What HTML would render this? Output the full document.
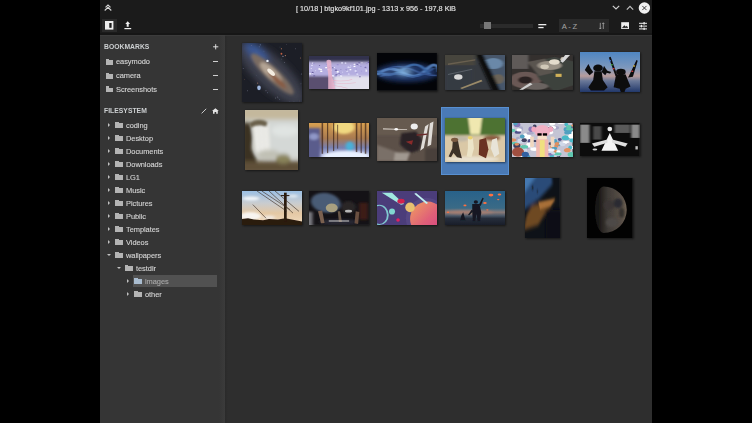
<!DOCTYPE html>
<html><head><meta charset="utf-8">
<style>
*{margin:0;padding:0;box-sizing:border-box}
html,body{width:752px;height:423px;overflow:hidden;background:#000;font-family:"Liberation Sans",sans-serif}
.a{position:absolute}
#app{position:absolute;left:100px;top:0;width:552px;height:423px;background:#2e2e2e;overflow:hidden}
#tb{position:absolute;left:0;top:0;width:552px;height:35px;background:#1b1b1b;border-bottom:2px solid #161616}
#title{position:absolute;left:0;top:3.5px;width:552px;text-align:center;color:#e4e4e4;font-size:8px;letter-spacing:0px;line-height:10px;white-space:nowrap;transform:scaleX(0.908);-webkit-text-stroke:0.15px #e4e4e4}
#side{position:absolute;left:0;top:35px;width:125px;height:388px;background:#353535;border-top:1px solid #3c3c3c}
#side .strip{position:absolute;right:0;top:0;width:6px;height:389px;background:linear-gradient(to right,rgba(59,59,59,0),#3b3b3b)}
.hdr{position:absolute;left:3.8px;font-weight:bold;font-size:7.3px;letter-spacing:0.05px;color:#cdd0d2;line-height:8px;white-space:nowrap;transform:scaleX(0.925);transform-origin:0 0}
.it{position:absolute;font-size:8px;letter-spacing:-0.05px;color:#d4d4d4;line-height:9px;white-space:nowrap;-webkit-text-stroke:0.12px #d4d4d4;transform:scaleX(0.93);transform-origin:0 0}
.fold{position:absolute;width:8px;height:6px;background:#a8a8a8}
.fold:before{content:"";position:absolute;left:0;top:-1.2px;width:3.8px;height:1.2px;background:var(--c)}
.minus{position:absolute;left:112.7px;width:5px;height:1.2px;background:#d0d0d0}
.arr{position:absolute;width:0;height:0;border-top:2px solid transparent;border-bottom:2px solid transparent;border-left:2.6px solid #c0c0c0}
.arrd{position:absolute;width:0;height:0;border-left:2px solid transparent;border-right:2px solid transparent;border-top:2.6px solid #c0c0c0}
#content{position:absolute;left:125px;top:35px;width:427px;height:388px;background:#2e2e2e;border-top:1px solid #363636}
#content:before{content:"";position:absolute;left:0;top:0;width:3px;height:100%;background:linear-gradient(to right,#2a2a2a,rgba(46,46,46,0))}
.th{position:absolute;box-shadow:1px 1px 2px rgba(0,0,0,0.45),0 0 1px 0.3px rgba(0,0,0,0.18)}
</style></head><body>
<div id="app">
  <div id="tb">
    <!-- double chevron -->
    <svg class="a" style="left:3px;top:3px" width="10" height="10" viewBox="0 0 10 10"><path d="M2.5 4.3 L5 1.9 L7.5 4.3 M1.7 7.5 L5 4.3 L8.3 7.5" stroke="#d8d8d8" stroke-width="1.1" fill="none"/></svg>
    <div id="title">[ 10/18 ] btgko9kf101.jpg - 1313 x 956 - 197,8 KiB</div>
    <!-- window controls -->
    <svg class="a" style="left:512.3px;top:5.4px" width="9" height="6" viewBox="0 0 9 6"><path d="M0.8 0.8 L4 4 L7.2 0.8" stroke="#d0d0d0" stroke-width="1.2" fill="none"/></svg>
    <svg class="a" style="left:526.2px;top:5.2px" width="9" height="6" viewBox="0 0 9 6"><path d="M0.8 4.6 L4 1.4 L7.2 4.6" stroke="#c0c0c0" stroke-width="1.2" fill="none"/></svg>
    <svg class="a" style="left:538px;top:2px" width="13" height="13" viewBox="0 0 13 13"><circle cx="6.4" cy="6" r="5.7" fill="#f2f2f2"/><path d="M4.3 3.9 L8.5 8.1 M8.5 3.9 L4.3 8.1" stroke="#2a2a2a" stroke-width="0.9"/></svg>
    <!-- toggle -->
    <div class="a" style="left:1.5px;top:19px;width:15.5px;height:13px;background:#2a2a2a"></div>
    <svg class="a" style="left:4.8px;top:21px" width="9" height="9" viewBox="0 0 9 9"><rect x="0" y="0" width="8.4" height="8.6" fill="#eeeeee"/><rect x="4.3" y="2" width="2.3" height="4.8" fill="#1b1b1b"/></svg>
    <!-- upload -->
    <svg class="a" style="left:23.5px;top:21px" width="9" height="9" viewBox="0 0 9 9"><path d="M3.7 0.3 L1.3 3.0 L2.7 3.0 L2.7 5.8 L4.7 5.8 L4.7 3.0 L6.1 3.0 Z" fill="#eeeeee"/><rect x="0.4" y="7" width="6.8" height="1.2" fill="#eeeeee"/></svg>
    <!-- slider -->
    <div class="a" style="left:379.6px;top:23.6px;width:53px;height:4px;background:#2b2b2b"></div>
    <div class="a" style="left:383.8px;top:21.7px;width:7.5px;height:7.4px;background:#777"></div>
    <!-- sort icon -->
    <svg class="a" style="left:438.3px;top:22.5px" width="10" height="7" viewBox="0 0 10 7"><rect x="0.3" y="1" width="8" height="1.3" fill="#eee"/><rect x="0.3" y="3.9" width="5.3" height="1.3" fill="#eee"/></svg>
    <!-- sort combo -->
    <div class="a" style="left:458.5px;top:18.8px;width:50.3px;height:13.1px;background:#2a2a2a"></div>
    <div class="a" style="left:461.7px;top:21.6px;font-size:7.6px;color:#a4a4a4;line-height:9px;letter-spacing:-0.15px">A - Z</div>
    <svg class="a" style="left:498.8px;top:21.8px" width="6" height="8" viewBox="0 0 6 8"><path d="M1.3 0.8 V7 M0.3 5.8 L1.3 7 L2.3 5.8 M4.3 7 V0.8 M3.3 2 L4.3 0.8 L5.3 2" stroke="#a8a8a8" stroke-width="0.8" fill="none"/></svg>
    <!-- image icon -->
    <svg class="a" style="left:520.8px;top:21.8px" width="9" height="8" viewBox="0 0 9 8"><rect x="0.2" y="0.2" width="7.8" height="6.8" fill="#eee"/><path d="M1.2 5.8 L3.3 3.3 L4.8 4.8 L5.8 3.8 L7 5.8 Z" fill="#1b1b1b"/><rect x="1.2" y="5.6" width="5.8" height="0.5" fill="#1b1b1b"/></svg>
    <!-- settings icon -->
    <svg class="a" style="left:539px;top:21.5px" width="8" height="8" viewBox="0 0 8 8"><rect x="0" y="0.8" width="8" height="1" fill="#eee"/><rect x="0" y="3.6" width="8" height="1" fill="#eee"/><rect x="0" y="6.4" width="8" height="1" fill="#eee"/><rect x="4.5" y="0" width="1.2" height="2.6" fill="#eee"/><rect x="1.8" y="2.8" width="1.2" height="2.6" fill="#eee"/><rect x="4.5" y="5.6" width="1.2" height="2.4" fill="#eee"/></svg>
  </div>

  <div id="side">
    <div class="strip"></div>
  </div>

  <div id="content">
  </div>
<div class="hdr" style="left:3.8px;top:43.02px;font-size:7.3px;line-height:7.3px">BOOKMARKS</div>
<div class="hdr" style="left:3.8px;top:107.12px;font-size:7.3px;line-height:7.3px">FILESYSTEM</div>
<svg class="a" style="left:112.6px;top:43.6px" width="6" height="6" viewBox="0 0 6 6"><path d="M2.7 0.2 V5.4 M0.1 2.8 H5.3" stroke="#dcdcdc" stroke-width="1.0"/></svg>
<svg class="a" style="left:101px;top:107.5px" width="6" height="6" viewBox="0 0 6 6"><path d="M0.6 5.4 L5.2 0.8" stroke="#cccccc" stroke-width="1.0"/></svg>
<svg class="a" style="left:112.2px;top:107.8px" width="7" height="6" viewBox="0 0 7 6"><path d="M3.4 0.2 L6.8 3.0 L5.8 3.0 L5.8 5.8 L4.2 5.8 L4.2 4.0 L2.6 4.0 L2.6 5.8 L1.0 5.8 L1.0 3.0 L0.0 3.0 Z" fill="#e4e4e4"/></svg>
<div class="fold" style="left:5.70px;top:60.00px;width:7.8px;height:4.8px;background:#b4b4b4;--c:#b4b4b4"></div>
<div class="it" style="left:16.40px;top:58.33px;font-size:8.0px;line-height:8.0px">easymodo</div>
<div class="minus" style="top:61.20px"></div>
<div class="fold" style="left:5.70px;top:73.80px;width:7.8px;height:4.8px;background:#b4b4b4;--c:#b4b4b4"></div>
<div class="it" style="left:16.40px;top:72.13px;font-size:8.0px;line-height:8.0px">camera</div>
<div class="minus" style="top:75.00px"></div>
<div class="fold" style="left:5.70px;top:87.60px;width:7.8px;height:4.8px;background:#b4b4b4;--c:#b4b4b4"></div>
<div class="it" style="left:16.40px;top:85.93px;font-size:8.0px;line-height:8.0px">Screenshots</div>
<div class="minus" style="top:88.80px"></div>
<div class="arr" style="left:7.90px;top:123.00px"></div>
<div class="fold" style="left:15.00px;top:123.00px;width:8.1px;height:4.8px;background:#b4b4b4;--c:#b4b4b4"></div>
<div class="it" style="left:25.90px;top:121.53px;font-size:8.0px;line-height:8.0px">coding</div>
<div class="arr" style="left:7.90px;top:136.00px"></div>
<div class="fold" style="left:15.00px;top:136.00px;width:8.1px;height:4.8px;background:#b4b4b4;--c:#b4b4b4"></div>
<div class="it" style="left:25.90px;top:134.53px;font-size:8.0px;line-height:8.0px">Desktop</div>
<div class="arr" style="left:7.90px;top:149.00px"></div>
<div class="fold" style="left:15.00px;top:149.00px;width:8.1px;height:4.8px;background:#b4b4b4;--c:#b4b4b4"></div>
<div class="it" style="left:25.90px;top:147.53px;font-size:8.0px;line-height:8.0px">Documents</div>
<div class="arr" style="left:7.90px;top:162.00px"></div>
<div class="fold" style="left:15.00px;top:162.00px;width:8.1px;height:4.8px;background:#b4b4b4;--c:#b4b4b4"></div>
<div class="it" style="left:25.90px;top:160.53px;font-size:8.0px;line-height:8.0px">Downloads</div>
<div class="arr" style="left:7.90px;top:175.00px"></div>
<div class="fold" style="left:15.00px;top:175.00px;width:8.1px;height:4.8px;background:#b4b4b4;--c:#b4b4b4"></div>
<div class="it" style="left:25.90px;top:173.53px;font-size:8.0px;line-height:8.0px">LG1</div>
<div class="arr" style="left:7.90px;top:188.00px"></div>
<div class="fold" style="left:15.00px;top:188.00px;width:8.1px;height:4.8px;background:#b4b4b4;--c:#b4b4b4"></div>
<div class="it" style="left:25.90px;top:186.53px;font-size:8.0px;line-height:8.0px">Music</div>
<div class="arr" style="left:7.90px;top:201.00px"></div>
<div class="fold" style="left:15.00px;top:201.00px;width:8.1px;height:4.8px;background:#b4b4b4;--c:#b4b4b4"></div>
<div class="it" style="left:25.90px;top:199.53px;font-size:8.0px;line-height:8.0px">Pictures</div>
<div class="arr" style="left:7.90px;top:214.00px"></div>
<div class="fold" style="left:15.00px;top:214.00px;width:8.1px;height:4.8px;background:#b4b4b4;--c:#b4b4b4"></div>
<div class="it" style="left:25.90px;top:212.53px;font-size:8.0px;line-height:8.0px">Public</div>
<div class="arr" style="left:7.90px;top:227.00px"></div>
<div class="fold" style="left:15.00px;top:227.00px;width:8.1px;height:4.8px;background:#b4b4b4;--c:#b4b4b4"></div>
<div class="it" style="left:25.90px;top:225.53px;font-size:8.0px;line-height:8.0px">Templates</div>
<div class="arr" style="left:7.90px;top:240.00px"></div>
<div class="fold" style="left:15.00px;top:240.00px;width:8.1px;height:4.8px;background:#b4b4b4;--c:#b4b4b4"></div>
<div class="it" style="left:25.90px;top:238.53px;font-size:8.0px;line-height:8.0px">Videos</div>
<div class="arrd" style="left:7.00px;top:253.80px"></div>
<div class="fold" style="left:15.00px;top:253.00px;width:8.1px;height:4.8px;background:#b4b4b4;--c:#b4b4b4"></div>
<div class="it" style="left:25.90px;top:251.53px;font-size:8.0px;line-height:8.0px">wallpapers</div>
<div class="arrd" style="left:16.70px;top:266.80px"></div>
<div class="fold" style="left:24.70px;top:266.00px;width:8.1px;height:4.8px;background:#b4b4b4;--c:#b4b4b4"></div>
<div class="it" style="left:35.60px;top:264.53px;font-size:8.0px;line-height:8.0px">testdir</div>
<div class="a" style="left:32.80000000000001px;top:274.7px;width:84.2px;height:12.3px;background:#515151"></div>
<div class="arr" style="left:27.30px;top:279.00px"></div>
<div class="fold" style="left:34.40px;top:279.00px;width:8.1px;height:4.8px;background:#a9bccf;--c:#a9bccf"></div>
<div class="it" style="left:45.30px;top:277.53px;font-size:8.0px;line-height:8.0px;color:#a8a8a8;-webkit-text-stroke-color:#a8a8a8">images</div>
<div class="arr" style="left:27.30px;top:292.00px"></div>
<div class="fold" style="left:34.40px;top:292.00px;width:8.1px;height:4.8px;background:#b4b4b4;--c:#b4b4b4"></div>
<div class="it" style="left:45.30px;top:290.53px;font-size:8.0px;line-height:8.0px">other</div>
<div class="a" style="left:341.2px;top:107.2px;width:67.6px;height:67.6px;background:#4a7ab6;box-shadow:inset 0 0 0 1px #5890d2"></div>
<div class="th" style="left:141.60px;top:42.60px;width:60.70px;height:59.70px"><svg width="60.70" height="59.70" viewBox="0 0 100 100" preserveAspectRatio="none" style="display:block"><defs><filter id="g1" x="-30%" y="-30%" width="160%" height="160%"><feGaussianBlur stdDeviation="6"/></filter></defs><defs><filter id="g1a" x="-30%" y="-30%" width="160%" height="160%"><feGaussianBlur stdDeviation="2.5"/></filter></defs><defs><filter id="g1b" x="-30%" y="-30%" width="160%" height="160%"><feGaussianBlur stdDeviation="0.8"/></filter></defs><rect width="100" height="100" fill="#1c1e26"/><g filter="url(#g1b)"><circle cx="23.8" cy="54.4" r="0.7" fill="#7080a0"/><circle cx="62.6" cy="6.6" r="0.5" fill="#7080a0"/><circle cx="25.9" cy="23.4" r="1.1" fill="#7080a0"/><circle cx="54.1" cy="55.0" r="0.7" fill="#a0a0b8"/><circle cx="23.2" cy="15.2" r="1.1" fill="#7080a0"/><circle cx="74.1" cy="67.1" r="0.5" fill="#8a8aa0"/><circle cx="30.1" cy="3.1" r="1.0" fill="#7080a0"/><circle cx="59.5" cy="92.0" r="0.7" fill="#7080a0"/><circle cx="39.5" cy="80.1" r="0.8" fill="#a0a0b8"/><circle cx="87.9" cy="9.7" r="0.6" fill="#a0a0b8"/><circle cx="25.8" cy="67.2" r="1.0" fill="#c08060"/><circle cx="42.1" cy="83.3" r="0.8" fill="#7080a0"/><circle cx="58.4" cy="90.4" r="0.9" fill="#8a8aa0"/><circle cx="85.6" cy="99.1" r="0.9" fill="#a0a0b8"/><circle cx="69.9" cy="32.6" r="0.8" fill="#8a8aa0"/><circle cx="71.4" cy="21.1" r="1.0" fill="#c08060"/><circle cx="28.5" cy="6.3" r="1.0" fill="#7080a0"/><circle cx="8.9" cy="80.1" r="0.7" fill="#a0a0b8"/><circle cx="2.0" cy="42.7" r="0.7" fill="#8a8aa0"/><circle cx="4.4" cy="61.5" r="0.5" fill="#c08060"/><circle cx="55.1" cy="92.2" r="0.7" fill="#a0a0b8"/><circle cx="99.9" cy="31.0" r="0.5" fill="#8a8aa0"/><circle cx="94.9" cy="97.1" r="0.7" fill="#c08060"/><circle cx="15.6" cy="4.2" r="1.0" fill="#c08060"/><circle cx="36.0" cy="13.8" r="1.0" fill="#7080a0"/><circle cx="46.0" cy="52.0" r="0.9" fill="#8a8aa0"/><circle cx="62.0" cy="94.1" r="0.8" fill="#7080a0"/><circle cx="63.4" cy="71.6" r="1.1" fill="#7080a0"/><circle cx="97.8" cy="52.1" r="0.8" fill="#8a8aa0"/><circle cx="78.8" cy="98.7" r="0.7" fill="#7080a0"/><circle cx="61.6" cy="63.2" r="0.5" fill="#c08060"/><circle cx="46.6" cy="67.9" r="0.7" fill="#c08060"/><circle cx="73.8" cy="2.2" r="0.5" fill="#8a8aa0"/><circle cx="96.3" cy="25.1" r="0.8" fill="#c08060"/><circle cx="17.7" cy="18.5" r="1.0" fill="#c08060"/><circle cx="30.0" cy="37.7" r="1.0" fill="#8a8aa0"/><circle cx="97.1" cy="68.4" r="0.6" fill="#a0a0b8"/><circle cx="65.4" cy="26.9" r="0.7" fill="#7080a0"/><circle cx="65.0" cy="9.7" r="0.9" fill="#c08060"/><circle cx="67.5" cy="22.4" r="1.0" fill="#a0a0b8"/></g><g filter="url(#g1)"><ellipse cx="48" cy="50" rx="72" ry="26" transform="rotate(44 48 50)" fill="#3e404e"/><ellipse cx="24" cy="16" rx="24" ry="10" transform="rotate(44 24 16)" fill="#3a5a9a"/></g><g filter="url(#g1a)"><ellipse cx="50" cy="52" rx="48" ry="11" transform="rotate(44 50 52)" fill="#7a6c62"/><ellipse cx="48" cy="50" rx="24" ry="8" transform="rotate(44 48 50)" fill="#b4a494"/><ellipse cx="58" cy="62" rx="20" ry="4" transform="rotate(44 58 62)" fill="#8a5a40"/></g><g filter="url(#g1b)"><ellipse cx="48" cy="49" rx="8" ry="3.5" transform="rotate(44 48 49)" fill="#f4ece0"/><ellipse cx="28" cy="75" rx="3" ry="4" fill="#a0b8e0"/><circle cx="42" cy="30" r="2" fill="#e8eef8"/><circle cx="65" cy="18" r="1.5" fill="#c06040"/></g></svg></div>
<div class="th" style="left:209.20px;top:55.50px;width:60.00px;height:33.50px"><svg width="60.00" height="33.50" viewBox="0 0 100 100" preserveAspectRatio="none" style="display:block"><defs><filter id="g2" x="-30%" y="-30%" width="160%" height="160%"><feGaussianBlur stdDeviation="2.5"/></filter></defs><defs><filter id="g2b" x="-30%" y="-30%" width="160%" height="160%"><feGaussianBlur stdDeviation="0.9"/></filter></defs><defs><filter id="g2c" x="-30%" y="-30%" width="160%" height="160%"><feGaussianBlur stdDeviation="0.5"/></filter></defs><rect width="100" height="100" fill="#a8a2c8"/><g filter="url(#g2)"><rect x="-10" y="-10" width="120" height="26" fill="#30304e"/><rect x="-10" y="24" width="120" height="36" fill="#b4aee0"/><rect x="-10" y="60" width="48" height="50" fill="#5a5070"/><rect x="42" y="60" width="68" height="50" fill="#e2e0ec"/></g><g filter="url(#g2c)"><circle cx="32.4" cy="24.6" r="1.8" fill="#ffffff"/><circle cx="82.1" cy="22.1" r="1.7" fill="#e8e8ff"/><circle cx="3.7" cy="37.1" r="1.1" fill="#ffffff"/><circle cx="55.1" cy="20.6" r="1.7" fill="#e8e8ff"/><circle cx="63.1" cy="43.7" r="1.1" fill="#6a60a0"/><circle cx="5.0" cy="27.7" r="1.7" fill="#e8e8ff"/><circle cx="29.0" cy="24.3" r="1.1" fill="#9a90d0"/><circle cx="56.0" cy="48.0" r="1.1" fill="#e8e8ff"/><circle cx="37.2" cy="42.1" r="1.1" fill="#ffffff"/><circle cx="61.9" cy="39.8" r="1.6" fill="#9a90d0"/><circle cx="46.6" cy="58.6" r="1.4" fill="#e8e8ff"/><circle cx="79.4" cy="48.8" r="1.3" fill="#9a90d0"/><circle cx="52.5" cy="56.5" r="1.9" fill="#9a90d0"/><circle cx="60.9" cy="21.2" r="1.6" fill="#e8e8ff"/><circle cx="75.7" cy="24.7" r="1.6" fill="#ffffff"/><circle cx="96.2" cy="21.4" r="1.7" fill="#9a90d0"/><circle cx="34.0" cy="33.4" r="1.6" fill="#6a60a0"/><circle cx="6.9" cy="22.1" r="1.3" fill="#ffffff"/><circle cx="6.1" cy="48.9" r="1.8" fill="#6a60a0"/><circle cx="28.5" cy="35.0" r="1.8" fill="#ffffff"/><circle cx="94.1" cy="33.6" r="1.7" fill="#6a60a0"/><circle cx="5.9" cy="51.8" r="1.2" fill="#e8e8ff"/><circle cx="39.8" cy="58.3" r="1.6" fill="#e8e8ff"/><circle cx="44.9" cy="42.2" r="2.1" fill="#6a60a0"/><circle cx="86.4" cy="30.3" r="1.5" fill="#9a90d0"/><circle cx="68.3" cy="34.7" r="1.3" fill="#ffffff"/><circle cx="17.6" cy="28.2" r="1.3" fill="#6a60a0"/><circle cx="83.1" cy="26.0" r="1.3" fill="#e8e8ff"/><circle cx="41.9" cy="34.2" r="1.7" fill="#e8e8ff"/><circle cx="69.0" cy="40.7" r="1.7" fill="#ffffff"/><circle cx="45.7" cy="56.3" r="2.1" fill="#6a60a0"/><circle cx="39.8" cy="35.3" r="1.6" fill="#6a60a0"/><circle cx="6.2" cy="21.0" r="1.3" fill="#e8e8ff"/><circle cx="11.0" cy="44.4" r="1.1" fill="#e8e8ff"/><circle cx="53.7" cy="59.8" r="1.7" fill="#ffffff"/><circle cx="87.4" cy="45.0" r="1.2" fill="#9a90d0"/><circle cx="95.5" cy="44.5" r="1.6" fill="#ffffff"/><circle cx="84.9" cy="61.7" r="1.6" fill="#6a60a0"/><circle cx="31.2" cy="24.3" r="1.9" fill="#9a90d0"/><circle cx="47.9" cy="48.5" r="1.6" fill="#e8e8ff"/><circle cx="95.1" cy="41.2" r="1.2" fill="#ffffff"/><circle cx="75.8" cy="31.1" r="1.8" fill="#ffffff"/><circle cx="69.6" cy="29.5" r="1.4" fill="#e8e8ff"/><circle cx="35.6" cy="27.8" r="1.6" fill="#9a90d0"/><circle cx="63.6" cy="45.0" r="1.9" fill="#e8e8ff"/><circle cx="80.6" cy="54.0" r="1.9" fill="#e8e8ff"/><circle cx="20.0" cy="39.7" r="1.9" fill="#ffffff"/><circle cx="79.0" cy="38.8" r="1.2" fill="#9a90d0"/><circle cx="44.7" cy="59.2" r="2.2" fill="#9a90d0"/><circle cx="8.1" cy="22.5" r="1.6" fill="#9a90d0"/><circle cx="20.4" cy="45.5" r="2.1" fill="#ffffff"/><circle cx="47.9" cy="46.7" r="2.0" fill="#ffffff"/><circle cx="83.5" cy="23.3" r="1.5" fill="#e8e8ff"/><circle cx="47.8" cy="25.9" r="1.9" fill="#9a90d0"/><circle cx="8.7" cy="59.6" r="1.9" fill="#6a60a0"/><circle cx="40.1" cy="59.7" r="1.9" fill="#e8e8ff"/><circle cx="99.3" cy="19.2" r="1.7" fill="#6a60a0"/><circle cx="80.7" cy="24.4" r="2.0" fill="#6a60a0"/><circle cx="65.7" cy="33.4" r="1.7" fill="#e8e8ff"/><circle cx="2.1" cy="53.2" r="1.9" fill="#ffffff"/><circle cx="52.7" cy="59.1" r="1.5" fill="#e8e8ff"/><circle cx="82.6" cy="27.3" r="1.3" fill="#9a90d0"/><circle cx="50.1" cy="51.6" r="1.4" fill="#6a60a0"/><circle cx="83.4" cy="20.7" r="1.9" fill="#6a60a0"/><circle cx="66.2" cy="53.9" r="1.6" fill="#e8e8ff"/><circle cx="53.2" cy="41.0" r="1.0" fill="#6a60a0"/><circle cx="77.7" cy="44.8" r="1.9" fill="#e8e8ff"/><circle cx="17.2" cy="38.8" r="1.9" fill="#ffffff"/><circle cx="32.6" cy="40.8" r="1.7" fill="#ffffff"/><circle cx="88.3" cy="20.5" r="1.2" fill="#ffffff"/></g><g filter="url(#g2b)"><path d="M29 14 Q33 8 37 14 L38 55 L44 100 L32 100 L32 55 Z" fill="#eab4cc" opacity="0.85"/><path d="M38 72 Q55 78 72 70 M40 80 Q58 84 78 80 M40 88 Q52 90 64 96" stroke="#e8aac0" stroke-width="1.8" fill="none" opacity="0.8"/></g></svg></div>
<div class="th" style="left:277.00px;top:53.10px;width:59.90px;height:37.60px"><svg width="59.90" height="37.60" viewBox="0 0 100 100" preserveAspectRatio="none" style="display:block"><defs><filter id="g3" x="-30%" y="-30%" width="160%" height="160%"><feGaussianBlur stdDeviation="5"/></filter></defs><defs><filter id="g3b" x="-30%" y="-30%" width="160%" height="160%"><feGaussianBlur stdDeviation="1.6"/></filter></defs><rect width="100" height="100" fill="#030408"/><g filter="url(#g3)"><ellipse cx="50" cy="52" rx="52" ry="26" fill="#1a3060"/></g><g filter="url(#g3b)" fill="none" opacity="0.85"><path d="M0 58 Q20 30 42 52 T82 45 T104 50" stroke="#5a88c8" stroke-width="7"/><path d="M0 48 Q22 70 45 42 T88 58" stroke="#4070b0" stroke-width="6"/><path d="M5 62 Q30 50 50 60 T95 40" stroke="#3a60a0" stroke-width="4"/><path d="M20 40 Q40 30 60 45 T100 60" stroke="#3a5a98" stroke-width="4"/></g><g filter="url(#g3)"><ellipse cx="45" cy="50" rx="14" ry="12" fill="#90c0e8" opacity="0.7"/><ellipse cx="15" cy="55" rx="10" ry="6" fill="#80a8e0" opacity="0.5"/></g></svg></div>
<div class="th" style="left:344.70px;top:55.20px;width:60.50px;height:34.40px"><svg width="60.50" height="34.40" viewBox="0 0 100 100" preserveAspectRatio="none" style="display:block"><defs><filter id="g4" x="-30%" y="-30%" width="160%" height="160%"><feGaussianBlur stdDeviation="2.2"/></filter></defs><defs><filter id="g4b" x="-30%" y="-30%" width="160%" height="160%"><feGaussianBlur stdDeviation="0.9"/></filter></defs><rect width="100" height="100" fill="#363a40"/><g filter="url(#g4)"><rect x="-5" y="-5" width="55" height="35" fill="#46443e"/><rect x="0" y="40" width="45" height="65" fill="#343a42"/><path d="M62 -5 L105 -5 L105 105 L90 105 L72 50 Z" fill="#46566a"/><ellipse cx="80" cy="25" rx="16" ry="16" fill="#6a88a8"/><ellipse cx="88" cy="70" rx="10" ry="14" fill="#6a6458"/><path d="M50 -5 L62 -5 L92 105 L78 105 Z" fill="#0c0e10"/></g><g filter="url(#g4b)"><ellipse cx="22" cy="64" rx="7" ry="8" fill="#d8d8d8"/><path d="M25 96 L60 72 L62 76 L28 99 Z" fill="#9a8a68"/><path d="M5 25 L50 12 L50 16 L5 29 Z" fill="#6a6050"/><path d="M5 55 L45 40 L45 43 L5 58 Z" fill="#5a6068"/></g></svg></div>
<div class="th" style="left:412.00px;top:54.80px;width:60.50px;height:34.80px"><svg width="60.50" height="34.80" viewBox="0 0 100 100" preserveAspectRatio="none" style="display:block"><defs><filter id="g5" x="-30%" y="-30%" width="160%" height="160%"><feGaussianBlur stdDeviation="2.0"/></filter></defs><defs><filter id="g5b" x="-30%" y="-30%" width="160%" height="160%"><feGaussianBlur stdDeviation="0.9"/></filter></defs><rect width="100" height="100" fill="#34302e"/><g filter="url(#g5)"><rect x="-5" y="-5" width="32" height="45" fill="#5e5a58"/><ellipse cx="22" cy="72" rx="26" ry="24" fill="#6a5854"/><ellipse cx="22" cy="72" rx="12" ry="10" fill="#2a2020"/><path d="M30 25 L70 5 L105 20 L105 85 L70 105 L45 70 Z" fill="#3e423e"/><path d="M25 20 L55 10 L70 50 L45 60 Z" fill="#5a5450"/><ellipse cx="62" cy="30" rx="20" ry="13" fill="#9a9286"/><ellipse cx="40" cy="90" rx="20" ry="10" fill="#6a6460"/></g><g filter="url(#g5b)"><ellipse cx="70" cy="20" rx="9" ry="8" fill="#e4dccc"/><ellipse cx="54" cy="34" rx="7" ry="7" fill="#d0c8b8"/><ellipse cx="84" cy="12" rx="4" ry="6" fill="#c8c0b0"/><rect x="72" y="54" width="10" height="9" fill="#d0b058"/><path d="M12 100 L30 80 L34 84 L18 100 Z" fill="#d0d0d0"/><path d="M88 0 L96 0 L84 22 L80 18 Z" fill="#d8d8d8"/></g></svg></div>
<div class="th" style="left:480.00px;top:52.30px;width:60.10px;height:40.00px"><svg width="60.10" height="40.00" viewBox="0 0 100 100" preserveAspectRatio="none" style="display:block"><defs><filter id="g6" x="-30%" y="-30%" width="160%" height="160%"><feGaussianBlur stdDeviation="2.5"/></filter></defs><defs><filter id="g6b" x="-30%" y="-30%" width="160%" height="160%"><feGaussianBlur stdDeviation="0.7"/></filter></defs><defs><linearGradient id="l6" x1="0" y1="0" x2="0" y2="1"><stop offset="0" stop-color="#4f86c2"/><stop offset="0.4" stop-color="#7e98bc"/><stop offset="0.6" stop-color="#b89c9c"/><stop offset="0.72" stop-color="#6a7898"/><stop offset="1" stop-color="#22386a"/></linearGradient></defs><rect width="100" height="100" fill="url(#l6)"/><g filter="url(#g6b)" fill="#0a0a10"><path d="M8 45 L14 30 L18 42 L22 50 L16 58 Z"/><path d="M36 50 L40 35 L46 48 L42 58 Z"/><ellipse cx="30" cy="40" rx="8" ry="9"/><path d="M24 48 L36 48 L38 70 L46 88 L40 96 L18 96 L14 88 L22 70 Z"/><ellipse cx="68" cy="50" rx="8" ry="8"/><path d="M60 56 L76 56 L80 72 L84 86 L76 92 L74 100 L68 100 L66 92 L56 88 L58 72 Z"/><path d="M48 14 L51 12 L62 58 L59 60 Z"/><path d="M94 20 L96 22 L88 62 L80 64 L82 58 Z"/><path d="M44 46 L52 50 L50 54 L44 52 Z"/></g><g filter="url(#g6b)"><circle cx="50" cy="22" r="1.8" fill="#4070d0"/><circle cx="53" cy="32" r="1.8" fill="#40a040"/><circle cx="56" cy="42" r="1.8" fill="#d04040"/><circle cx="90" cy="35" r="1.8" fill="#e0c040"/><circle cx="87" cy="48" r="1.8" fill="#d04040"/></g></svg></div>
<div class="th" style="left:144.80px;top:110.00px;width:53.10px;height:59.50px"><svg width="53.10" height="59.50" viewBox="0 0 100 100" preserveAspectRatio="none" style="display:block"><defs><filter id="g7" x="-30%" y="-30%" width="160%" height="160%"><feGaussianBlur stdDeviation="3.5"/></filter></defs><defs><filter id="g7b" x="-30%" y="-30%" width="160%" height="160%"><feGaussianBlur stdDeviation="1.8"/></filter></defs><rect width="100" height="100" fill="#c8c8c0"/><g filter="url(#g7)"><rect x="-5" y="-5" width="110" height="20" fill="#c4b89c"/><rect x="40" y="18" width="65" height="62" fill="#d4d8d6"/><ellipse cx="75" cy="35" rx="25" ry="10" fill="#e0e4e2"/><path d="M14 24 L45 24 L48 70 L20 72 Z" fill="#e8e8e4"/><path d="M-5 20 L10 22 L14 45 L12 65 L24 88 L34 100 L-5 105 Z" fill="#3a3222"/><rect x="-5" y="86" width="110" height="20" fill="#5e5038"/><ellipse cx="72" cy="82" rx="14" ry="8" fill="#8a845c"/><ellipse cx="45" cy="74" rx="20" ry="7" fill="#c0c0b4"/></g><g filter="url(#g7b)"><path d="M8 22 Q25 12 42 20 L40 28 Q25 22 10 30 Z" fill="#6a604c"/><path d="M22 30 L24 68 M30 28 L33 66 M38 28 L40 64" stroke="#f0f0ec" stroke-width="2" fill="none" opacity="0.6"/></g></svg></div>
<div class="th" style="left:209.20px;top:122.80px;width:60.00px;height:34.20px"><svg width="60.00" height="34.20" viewBox="0 0 100 100" preserveAspectRatio="none" style="display:block"><defs><filter id="g8" x="-30%" y="-30%" width="160%" height="160%"><feGaussianBlur stdDeviation="3"/></filter></defs><defs><filter id="g8b" x="-30%" y="-30%" width="160%" height="160%"><feGaussianBlur stdDeviation="1.0"/></filter></defs><defs><linearGradient id="l8" x1="0" y1="0" x2="0" y2="1"><stop offset="0" stop-color="#d8a050"/><stop offset="0.45" stop-color="#a87a50"/><stop offset="0.72" stop-color="#7880b0"/><stop offset="1" stop-color="#c8d0f0"/></linearGradient></defs><rect width="100" height="100" fill="url(#l8)"/><g filter="url(#g8)"><ellipse cx="58" cy="12" rx="18" ry="20" fill="#f0d880"/><rect x="-5" y="15" width="24" height="90" fill="#5a5c8c"/><ellipse cx="8" cy="40" rx="8" ry="10" fill="#9098c8"/><ellipse cx="62" cy="96" rx="38" ry="14" fill="#e8f0ff"/><ellipse cx="68" cy="68" rx="7" ry="14" fill="#48b0d8"/></g><g filter="url(#g8b)" fill="#3a2018" opacity="0.7"><rect x="21" y="0" width="2.5" height="90"/><rect x="30" y="0" width="2" height="88"/><rect x="40" y="0" width="2" height="82"/><rect x="47" y="5" width="1.5" height="70"/><rect x="78" y="0" width="2.5" height="85"/><rect x="86" y="0" width="2" height="88"/><rect x="93" y="0" width="2.5" height="90"/></g></svg></div>
<div class="th" style="left:276.80px;top:118.40px;width:60.10px;height:43.00px"><svg width="60.10" height="43.00" viewBox="0 0 100 100" preserveAspectRatio="none" style="display:block"><defs><filter id="g9" x="-30%" y="-30%" width="160%" height="160%"><feGaussianBlur stdDeviation="2.2"/></filter></defs><defs><filter id="g9b" x="-30%" y="-30%" width="160%" height="160%"><feGaussianBlur stdDeviation="0.9"/></filter></defs><rect width="100" height="100" fill="#5c5048"/><g filter="url(#g9)"><rect x="-5" y="-5" width="110" height="45" fill="#665a50"/><path d="M40 35 L65 30 L75 50 L70 75 L55 82 L38 62 Z" fill="#2c2428"/><path d="M0 62 L35 80 L45 100 L0 100 Z" fill="#7a7068"/><path d="M30 80 L55 80 L50 100 L28 100 Z" fill="#a09890"/><rect x="80" y="70" width="25" height="35" fill="#4a403a"/></g><g filter="url(#g9b)"><ellipse cx="62" cy="20" rx="6" ry="7" fill="#eeeeee"/><path d="M10 24 L50 26 L50 28 L10 27 Z" fill="#d0c8c0"/><circle cx="32" cy="26" r="3" fill="#f8f8f8"/><path d="M80 20 L86 14 L78 70 L72 76 Z M88 12 L94 8 L90 62 L84 66 Z" fill="#e0dcd8"/><path d="M48 55 L60 52 L58 62 Z" fill="#8a2a2a"/><path d="M66 38 L85 36 L84 39 L66 42 Z" fill="#6a2a2a"/></g></svg></div>
<div class="th" style="left:344.70px;top:118.00px;width:60.30px;height:43.70px"><svg width="60.30" height="43.70" viewBox="0 0 100 100" preserveAspectRatio="none" style="display:block"><defs><filter id="g10" x="-30%" y="-30%" width="160%" height="160%"><feGaussianBlur stdDeviation="2.2"/></filter></defs><defs><filter id="g10b" x="-30%" y="-30%" width="160%" height="160%"><feGaussianBlur stdDeviation="0.8"/></filter></defs><rect width="100" height="100" fill="#d8c8a4"/><g filter="url(#g10)"><rect x="-5" y="-5" width="110" height="45" fill="#4e7232"/><path d="M38 -5 L62 -5 L58 38 L42 38 Z" fill="#f0e8b0"/><rect x="-5" y="40" width="110" height="66" fill="#dac8a6"/><ellipse cx="45" cy="94" rx="45" ry="6" fill="#eae2d0"/><ellipse cx="25" cy="48" rx="14" ry="6" fill="#c0b8a8"/><ellipse cx="78" cy="46" rx="14" ry="6" fill="#8a5a40"/></g><g filter="url(#g10b)"><path d="M13 52 L21 48 L24 70 L28 92 L20 90 L14 80 L10 90 L6 88 L12 70 Z" fill="#3e3028"/><ellipse cx="16" cy="50" rx="6" ry="5" fill="#7a5a40"/><path d="M38 46 L46 46 L48 70 L44 90 L36 88 L38 70 Z" fill="#ece4c8"/><ellipse cx="42" cy="45" rx="4" ry="4" fill="#e8d070"/><path d="M57 50 L68 46 L72 72 L68 92 L56 84 Z" fill="#6a3020"/><path d="M78 50 L86 46 L90 82 L82 90 L76 70 Z" fill="#e8e4d8"/></g></svg></div>
<div class="th" style="left:412.00px;top:122.80px;width:60.50px;height:34.20px"><svg width="60.50" height="34.20" viewBox="0 0 100 100" preserveAspectRatio="none" style="display:block"><defs><filter id="g11" x="-30%" y="-30%" width="160%" height="160%"><feGaussianBlur stdDeviation="0.9"/></filter></defs><defs><filter id="g11b" x="-30%" y="-30%" width="160%" height="160%"><feGaussianBlur stdDeviation="0.6"/></filter></defs><rect width="100" height="100" fill="#c4c4d4"/><g filter="url(#g11)"><ellipse cx="14.5" cy="70.1" rx="4.1" ry="7.2" fill="#e09060"/><ellipse cx="101.9" cy="47.3" rx="3.7" ry="5.6" fill="#50a0c0"/><ellipse cx="80.6" cy="-1.5" rx="4.7" ry="3.7" fill="#d0d8e8"/><ellipse cx="76.6" cy="94.7" rx="3.2" ry="8.0" fill="#404060"/><ellipse cx="75.3" cy="89.8" rx="4.8" ry="7.8" fill="#d0d8e8"/><ellipse cx="65.8" cy="96.4" rx="3.6" ry="7.1" fill="#48b8c8"/><ellipse cx="10.2" cy="95.4" rx="3.6" ry="6.6" fill="#ffffff"/><ellipse cx="67.5" cy="46.8" rx="3.3" ry="4.0" fill="#f0f0f8"/><ellipse cx="68.4" cy="82.1" rx="6.0" ry="6.8" fill="#e09060"/><ellipse cx="10.0" cy="47.5" rx="3.8" ry="7.6" fill="#a8a8c8"/><ellipse cx="91.1" cy="40.4" rx="6.8" ry="5.5" fill="#60c8b0"/><ellipse cx="30.7" cy="48.4" rx="3.1" ry="3.5" fill="#50508a"/><ellipse cx="73.1" cy="102.2" rx="3.0" ry="3.4" fill="#ffffff"/><ellipse cx="100.9" cy="8.9" rx="3.7" ry="4.7" fill="#e09060"/><ellipse cx="95.3" cy="33.7" rx="6.7" ry="4.2" fill="#d0d8e8"/><ellipse cx="14.9" cy="94.9" rx="6.1" ry="4.9" fill="#ffffff"/><ellipse cx="69.4" cy="68.6" rx="6.8" ry="5.0" fill="#e09060"/><ellipse cx="101.8" cy="98.9" rx="3.1" ry="4.7" fill="#d0d8e8"/><ellipse cx="96.2" cy="23.1" rx="3.3" ry="7.0" fill="#50a0c0"/><ellipse cx="79.0" cy="48.2" rx="3.2" ry="4.3" fill="#50508a"/><ellipse cx="27.7" cy="41.5" rx="4.6" ry="7.4" fill="#ffffff"/><ellipse cx="65.4" cy="12.5" rx="6.0" ry="5.4" fill="#ffffff"/><ellipse cx="23.7" cy="98.6" rx="6.6" ry="5.4" fill="#50a0c0"/><ellipse cx="98.0" cy="92.3" rx="6.2" ry="7.4" fill="#60c8b0"/><ellipse cx="29.6" cy="53.6" rx="3.6" ry="6.6" fill="#50508a"/><ellipse cx="37.5" cy="10.3" rx="3.1" ry="6.0" fill="#404060"/><ellipse cx="65.2" cy="87.3" rx="4.7" ry="6.4" fill="#d0d8e8"/><ellipse cx="76.7" cy="83.1" rx="3.5" ry="3.5" fill="#ffffff"/><ellipse cx="7.0" cy="-0.3" rx="6.1" ry="3.4" fill="#ffffff"/><ellipse cx="9.6" cy="26.8" rx="5.2" ry="4.6" fill="#50508a"/><ellipse cx="14.6" cy="16.5" rx="3.8" ry="6.7" fill="#a8a8c8"/><ellipse cx="77.2" cy="61.0" rx="6.5" ry="6.9" fill="#50a0c0"/><ellipse cx="80.8" cy="-2.2" rx="6.5" ry="5.0" fill="#ffffff"/><ellipse cx="21.7" cy="99.2" rx="4.3" ry="3.2" fill="#d0d8e8"/><ellipse cx="92.5" cy="28.3" rx="6.2" ry="5.5" fill="#50a0c0"/><ellipse cx="3.4" cy="60.0" rx="6.9" ry="4.6" fill="#60c8b0"/><ellipse cx="71.1" cy="52.7" rx="3.8" ry="6.1" fill="#50a0c0"/><ellipse cx="31.5" cy="18.3" rx="4.3" ry="8.0" fill="#8878b8"/><ellipse cx="8.4" cy="5.1" rx="5.5" ry="7.0" fill="#8878b8"/><ellipse cx="100.6" cy="50.5" rx="5.7" ry="6.5" fill="#48b8c8"/><ellipse cx="89.8" cy="4.5" rx="3.2" ry="5.2" fill="#48b8c8"/><ellipse cx="23.2" cy="71.6" rx="5.9" ry="5.3" fill="#a8a8c8"/><ellipse cx="22.1" cy="37.9" rx="3.9" ry="7.6" fill="#ffffff"/><ellipse cx="66.4" cy="1.0" rx="5.0" ry="6.6" fill="#ffffff"/><ellipse cx="91.4" cy="79.6" rx="5.5" ry="6.1" fill="#e09060"/><ellipse cx="74.5" cy="61.2" rx="4.0" ry="5.4" fill="#e09060"/><ellipse cx="37.5" cy="52.6" rx="7.0" ry="3.0" fill="#404060"/><ellipse cx="30.1" cy="30.0" rx="5.9" ry="3.5" fill="#a8a8c8"/><ellipse cx="15.6" cy="52.4" rx="6.8" ry="6.7" fill="#d0d8e8"/><ellipse cx="98.3" cy="71.6" rx="5.7" ry="4.9" fill="#f0f0f8"/><ellipse cx="5.7" cy="0.0" rx="4.0" ry="7.2" fill="#50a0c0"/><ellipse cx="13.3" cy="69.2" rx="4.0" ry="6.4" fill="#f0f0f8"/><ellipse cx="72.9" cy="13.7" rx="4.9" ry="5.2" fill="#a8a8c8"/><ellipse cx="62.4" cy="26.7" rx="5.7" ry="6.1" fill="#ffffff"/><ellipse cx="7.5" cy="100.4" rx="3.1" ry="7.1" fill="#f0f0f8"/><ellipse cx="96.1" cy="71.7" rx="3.3" ry="5.9" fill="#48b8c8"/><ellipse cx="96.8" cy="12.7" rx="3.8" ry="4.9" fill="#50508a"/><ellipse cx="-2.7" cy="14.6" rx="6.2" ry="7.1" fill="#d0d8e8"/><ellipse cx="16.9" cy="39.7" rx="4.0" ry="5.9" fill="#50a0c0"/><ellipse cx="84.3" cy="59.0" rx="6.5" ry="3.1" fill="#ffffff"/><ellipse cx="92.4" cy="76.2" rx="3.8" ry="3.3" fill="#e09060"/><ellipse cx="83.4" cy="61.3" rx="5.0" ry="6.4" fill="#d0d8e8"/><ellipse cx="68.7" cy="13.2" rx="4.4" ry="4.5" fill="#ffffff"/><ellipse cx="63.5" cy="91.4" rx="5.7" ry="3.9" fill="#8878b8"/><ellipse cx="7.4" cy="84.8" rx="4.1" ry="3.3" fill="#60c8b0"/><ellipse cx="0.9" cy="49.5" rx="6.2" ry="5.0" fill="#e09060"/><ellipse cx="0.4" cy="21.7" rx="5.2" ry="5.0" fill="#60c8b0"/><ellipse cx="70.2" cy="74.1" rx="4.7" ry="4.6" fill="#50a0c0"/><ellipse cx="20.2" cy="50.3" rx="4.4" ry="5.7" fill="#404060"/><ellipse cx="63.6" cy="15.5" rx="4.5" ry="5.4" fill="#404060"/><ellipse cx="88.6" cy="43.8" rx="6.6" ry="6.4" fill="#48b8c8"/><ellipse cx="20.0" cy="79.4" rx="5.1" ry="7.5" fill="#d0d8e8"/><ellipse cx="99.8" cy="38.4" rx="6.7" ry="7.0" fill="#ffffff"/><ellipse cx="-1.8" cy="34.3" rx="4.1" ry="3.1" fill="#d0d8e8"/><ellipse cx="36.9" cy="76.3" rx="6.7" ry="5.7" fill="#ffffff"/><ellipse cx="90.5" cy="18.9" rx="5.2" ry="6.9" fill="#50a0c0"/><ellipse cx="75.4" cy="90.6" rx="6.6" ry="4.2" fill="#60c8b0"/><ellipse cx="68.2" cy="88.9" rx="3.5" ry="3.1" fill="#d0d8e8"/><ellipse cx="-0.2" cy="67.5" rx="6.0" ry="4.1" fill="#f0f0f8"/><ellipse cx="102.1" cy="28.4" rx="4.0" ry="5.1" fill="#ffffff"/><ellipse cx="64.9" cy="78.7" rx="5.6" ry="4.3" fill="#f0f0f8"/><ellipse cx="0.8" cy="84.2" rx="4.8" ry="4.5" fill="#d0d8e8"/><ellipse cx="11.8" cy="20.2" rx="4.5" ry="5.0" fill="#ffffff"/><ellipse cx="-2.6" cy="67.4" rx="4.2" ry="7.2" fill="#d0d8e8"/><ellipse cx="89.2" cy="55.7" rx="5.7" ry="3.1" fill="#ffffff"/><ellipse cx="94.1" cy="11.0" rx="4.8" ry="4.9" fill="#60c8b0"/><ellipse cx="63.6" cy="60.4" rx="3.3" ry="4.3" fill="#404060"/><ellipse cx="8.1" cy="66.5" rx="6.1" ry="7.0" fill="#404060"/><ellipse cx="95.4" cy="18.1" rx="6.6" ry="3.4" fill="#60c8b0"/><ellipse cx="29.6" cy="64.2" rx="6.0" ry="7.7" fill="#ffffff"/><ellipse cx="8.0" cy="62.4" rx="3.9" ry="4.0" fill="#e09060"/><ellipse cx="20.1" cy="69.8" rx="6.7" ry="5.6" fill="#60c8b0"/><ellipse cx="10" cy="85" rx="10" ry="14" fill="#a05040"/><ellipse cx="22" cy="92" rx="6" ry="8" fill="#3060a0"/><ellipse cx="50" cy="24" rx="13" ry="18" fill="#f0b0c4"/><ellipse cx="36" cy="18" rx="4" ry="8" fill="#f0a8c0"/><ellipse cx="64" cy="18" rx="4" ry="8" fill="#f0a8c0"/><ellipse cx="50" cy="44" rx="8" ry="8" fill="#f8e0c8"/><rect x="40" y="48" width="20" height="52" fill="#f0b8b0"/><rect x="46" y="50" width="8" height="50" fill="#f0e080"/><rect x="30" y="40" width="6" height="30" fill="#f0d8c0"/><rect x="64" y="40" width="6" height="30" fill="#f0d8c0"/></g><g filter="url(#g11b)"><rect x="42" y="30" width="7" height="7" fill="#000"/><rect x="51" y="30" width="7" height="7" fill="#000"/></g></svg></div>
<div class="th" style="left:480.00px;top:122.80px;width:59.60px;height:33.10px"><svg width="59.60" height="33.10" viewBox="0 0 100 100" preserveAspectRatio="none" style="display:block"><defs><filter id="g12" x="-30%" y="-30%" width="160%" height="160%"><feGaussianBlur stdDeviation="1.0"/></filter></defs><defs><filter id="g12b" x="-30%" y="-30%" width="160%" height="160%"><feGaussianBlur stdDeviation="2"/></filter></defs><rect width="100" height="100" fill="#0c0c0c"/><g filter="url(#g12b)"><rect x="0" y="5" width="16" height="55" fill="#8a8a8a"/><rect x="86" y="5" width="14" height="40" fill="#8a8a8a"/><rect x="58" y="5" width="26" height="25" fill="#5a5a5a"/><rect x="22" y="10" width="14" height="40" fill="#4a4a4a"/></g><g filter="url(#g12)"><path d="M50 30 L36 84 L64 84 Z" fill="#f4f4f4"/><path d="M20 62 L46 50 L46 60 L24 72 Z" fill="#e0e0e0"/><path d="M80 62 L54 50 L54 60 L76 72 Z" fill="#e0e0e0"/><ellipse cx="50" cy="18" rx="4" ry="7" fill="#e8e8e8"/><ellipse cx="25" cy="80" rx="4" ry="3" fill="#d0d0d0"/><rect x="93" y="70" width="4" height="10" fill="#c0c0c0"/></g></svg></div>
<div class="th" style="left:141.60px;top:190.70px;width:60.00px;height:34.00px"><svg width="60.00" height="34.00" viewBox="0 0 100 100" preserveAspectRatio="none" style="display:block"><defs><filter id="g13" x="-30%" y="-30%" width="160%" height="160%"><feGaussianBlur stdDeviation="2.5"/></filter></defs><defs><filter id="g13b" x="-30%" y="-30%" width="160%" height="160%"><feGaussianBlur stdDeviation="0.7"/></filter></defs><defs><linearGradient id="l13" x1="0" y1="0" x2="0" y2="1"><stop offset="0" stop-color="#9cc0e4"/><stop offset="0.35" stop-color="#c8ccd0"/><stop offset="0.65" stop-color="#e4c8a4"/><stop offset="1" stop-color="#f0dcc0"/></linearGradient></defs><rect width="100" height="100" fill="url(#l13)"/><g filter="url(#g13)"><ellipse cx="15" cy="22" rx="14" ry="6" fill="#f0f4f8"/><ellipse cx="14" cy="74" rx="18" ry="12" fill="#f8f4f0"/><ellipse cx="85" cy="15" rx="8" ry="5" fill="#e0e8f0"/><ellipse cx="45" cy="78" rx="10" ry="6" fill="#f0e8e0"/></g><g filter="url(#g13b)"><path d="M0 82 L10 80 L20 84 L35 86 L45 82 L60 84 L72 80 L100 90 L100 100 L0 100 Z" fill="#2a1a10"/><rect x="70" y="5" width="4.5" height="85" fill="#2a1a10"/><rect x="65" y="12" width="14" height="3" fill="#2a1a10"/><path d="M25 0 L75 60 M33 0 L80 55 M45 0 L85 65 M55 0 L95 60 M18 40 L40 80" stroke="#3a2a20" stroke-width="1.3" fill="none"/></g></svg></div>
<div class="th" style="left:209.30px;top:191.30px;width:59.90px;height:33.70px"><svg width="59.90" height="33.70" viewBox="0 0 100 100" preserveAspectRatio="none" style="display:block"><defs><filter id="g14" x="-30%" y="-30%" width="160%" height="160%"><feGaussianBlur stdDeviation="2.5"/></filter></defs><defs><filter id="g14b" x="-30%" y="-30%" width="160%" height="160%"><feGaussianBlur stdDeviation="1.0"/></filter></defs><rect width="100" height="100" fill="#141216"/><g filter="url(#g14)"><ellipse cx="28" cy="35" rx="24" ry="30" transform="rotate(-20 28 35)" fill="#4a5c76"/><ellipse cx="66" cy="48" rx="12" ry="18" fill="#2a2628"/><rect x="84" y="35" width="14" height="50" fill="#3e1e18"/><rect x="-5" y="62" width="11" height="45" fill="#7a7a80"/><ellipse cx="50" cy="92" rx="32" ry="9" fill="#262632"/></g><g filter="url(#g14b)"><ellipse cx="38" cy="50" rx="10" ry="13" fill="#a8a080"/><ellipse cx="66" cy="60" rx="6" ry="4" fill="#b8b8b8"/><path d="M15 60 L22 58 L26 95 L20 96 Z" fill="#7a6050"/><path d="M78 60 L84 62 L82 98 L76 96 Z" fill="#6a5040"/><path d="M48 60 L52 60 L55 92 L50 92 Z" fill="#6a5848"/></g><rect x="33" y="87" width="34" height="4" fill="#d8d8d8" opacity="0.7"/></svg></div>
<div class="th" style="left:276.80px;top:190.70px;width:60.10px;height:34.20px"><svg width="60.10" height="34.20" viewBox="0 0 100 100" preserveAspectRatio="none" style="display:block"><defs><filter id="g15" x="-30%" y="-30%" width="160%" height="160%"><feGaussianBlur stdDeviation="0.8"/></filter></defs><defs><linearGradient id="l15" x1="0" y1="0" x2="1" y2="1"><stop offset="0" stop-color="#f0a060"/><stop offset="0.5" stop-color="#e06078"/><stop offset="1" stop-color="#d03888"/></linearGradient></defs><rect width="100" height="100" fill="#4b3d7a"/><g filter="url(#g15)"><ellipse cx="82" cy="80" rx="34" ry="60" fill="#554684"/><ellipse cx="84" cy="82" rx="29" ry="51" fill="url(#l15)"/><ellipse cx="55" cy="48" rx="8" ry="14" fill="#e8c070"/><ellipse cx="25" cy="60" rx="5" ry="9" fill="#80d8d0"/><ellipse cx="4" cy="70" rx="14" ry="28" fill="none" stroke="#80c8d0" stroke-width="3"/><ellipse cx="35" cy="85" rx="3" ry="5" fill="#e02060"/><path d="M8 5 L25 5 L45 38 L40 40 Z" fill="#a0e8e0"/><ellipse cx="40" cy="30" rx="6" ry="7" fill="#d02050"/><path d="M62 8 L65 6 L85 35 L82 38 Z" fill="#c0f0f0"/></g></svg></div>
<div class="th" style="left:344.70px;top:190.70px;width:60.50px;height:34.30px"><svg width="60.50" height="34.30" viewBox="0 0 100 100" preserveAspectRatio="none" style="display:block"><defs><filter id="g16" x="-30%" y="-30%" width="160%" height="160%"><feGaussianBlur stdDeviation="3"/></filter></defs><defs><filter id="g16b" x="-30%" y="-30%" width="160%" height="160%"><feGaussianBlur stdDeviation="0.9"/></filter></defs><defs><linearGradient id="l16" x1="0" y1="0" x2="0" y2="1"><stop offset="0" stop-color="#28628a"/><stop offset="0.5" stop-color="#3a6a86"/><stop offset="0.62" stop-color="#8a7a78"/><stop offset="0.72" stop-color="#4a5868"/><stop offset="0.8" stop-color="#262e3c"/><stop offset="1" stop-color="#181c28"/></linearGradient></defs><rect width="100" height="100" fill="url(#l16)"/><g filter="url(#g16)"><ellipse cx="40" cy="62" rx="40" ry="6" fill="#b08070" opacity="0.7"/></g><g filter="url(#g16b)" fill="#ff7040"><circle cx="76" cy="12" r="4"/><circle cx="90" cy="10" r="3"/><circle cx="66" cy="35" r="3"/><circle cx="88" cy="25" r="2"/><circle cx="33" cy="42" r="2.5"/><circle cx="5" cy="62" r="2"/><circle cx="70" cy="55" r="2"/></g><g filter="url(#g16b)" fill="#141822"><ellipse cx="51" cy="32" rx="3.5" ry="5"/><path d="M45 38 L57 38 L60 62 L58 88 L54 88 L52 68 L50 88 L46 88 L45 62 Z"/><path d="M56 40 L62 20 L64 21 L59 44 Z"/><path d="M44 55 L38 70 L40 71 L47 58 Z"/><path d="M27 72 L30 62 L34 85 L25 85 Z"/></g></svg></div>
<div class="th" style="left:425.00px;top:177.50px;width:34.60px;height:60.70px"><svg width="34.60" height="60.70" viewBox="0 0 100 100" preserveAspectRatio="none" style="display:block"><defs><filter id="g17" x="-30%" y="-30%" width="160%" height="160%"><feGaussianBlur stdDeviation="3.5"/></filter></defs><defs><filter id="g17b" x="-30%" y="-30%" width="160%" height="160%"><feGaussianBlur stdDeviation="2.2"/></filter></defs><rect width="100" height="100" fill="#0e1218"/><g filter="url(#g17)"><path d="M-10 -10 L75 -10 L80 10 L40 35 L-10 55 Z" fill="#2a4c78"/><path d="M-10 -10 L40 -10 L-10 30 Z" fill="#4478b0"/><path d="M20 45 L90 34 L62 55 L38 78 L-5 86 L5 60 Z" fill="#6e4824"/><rect x="60" y="52" width="48" height="55" fill="#0c0e14"/></g><g filter="url(#g17b)"><path d="M38 40 L88 34 L74 46 L44 52 Z" fill="#a87038"/><circle cx="22" cy="16" r="3" fill="#18202c"/><circle cx="36" cy="22" r="2" fill="#18202c"/></g></svg></div>
<div class="th" style="left:487.20px;top:177.50px;width:45.60px;height:60.20px"><svg width="45.60" height="60.20" viewBox="0 0 100 100" preserveAspectRatio="none" style="display:block"><defs><filter id="g18" x="-30%" y="-30%" width="160%" height="160%"><feGaussianBlur stdDeviation="1.0"/></filter></defs><defs><filter id="g18b" x="-30%" y="-30%" width="160%" height="160%"><feGaussianBlur stdDeviation="2.0"/></filter></defs><defs><linearGradient id="l18" x1="0" y1="0" x2="1" y2="0"><stop offset="0.1" stop-color="#181614"/><stop offset="0.4" stop-color="#3e3a36"/><stop offset="0.85" stop-color="#5a5048"/><stop offset="1" stop-color="#6e6254"/></linearGradient></defs><rect width="100" height="100" fill="#020202"/><g filter="url(#g18)"><path d="M36.6 14.2 A50.6 38.6 0 0 1 36.6 91.4 A19 38.6 0 0 1 36.6 14.2 Z" fill="url(#l18)"/></g><g filter="url(#g18b)"><ellipse cx="68" cy="42" rx="10" ry="8" fill="#2c2c32"/><ellipse cx="76" cy="58" rx="6" ry="8" fill="#34322f"/><ellipse cx="48" cy="45" rx="12" ry="8" fill="#3a3634"/><ellipse cx="55" cy="74" rx="14" ry="8" fill="#4e4a46"/></g></svg></div>
</div>
</body></html>
